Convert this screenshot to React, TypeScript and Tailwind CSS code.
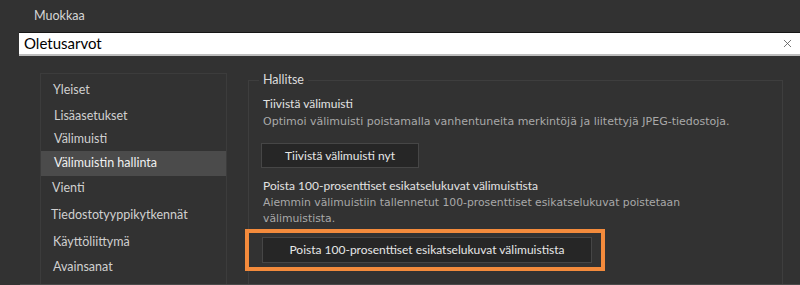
import { X } from "lucide-react";

const navItems = [
  { label: "Yleiset", pad: "pl-[12px]", h: "h-[28px]" },
  { label: "Lisäasetukset", pad: "pl-[13px]", h: "h-[24px]" },
  { label: "Välimuisti", pad: "pl-[13px]", h: "h-[23px]" },
  { label: "Välimuistin hallinta", pad: "pl-[13px]", h: "h-[25px]", active: true },
  { label: "Vienti", pad: "pl-[11px]", h: "h-[25px]" },
  { label: "Tiedostotyyppikytkennät", pad: "pl-[10px]", h: "h-[29px]" },
  { label: "Käyttöliittymä", pad: "pl-[12px]", h: "h-[25px]" },
  { label: "Avainsanat", pad: "pl-[12px]", h: "h-[24px]" },
];

export default function App() {
  return (
    <div className="w-[800px] h-[285px] overflow-hidden bg-[#323232] flex flex-col font-['Lato',sans-serif] text-[12px] text-[#dcdcdc]">
      <div className="h-[32px] pl-[34px] pt-[7px] text-[12.5px] text-[#d6d6d6]">Muokkaa</div>

      <div className="ml-[19px] h-[24px] bg-white border-t border-[#161616] border-b-2 border-b-[#bdbdbd] flex items-center justify-between pl-[5px] pr-[6px]">
        <span className="text-[15px] text-black leading-none">Oletusarvot</span>
        <X className="w-[13px] h-[13px] text-[#555]" strokeWidth={1.5} />
      </div>

      <div className="flex flex-1 pt-[17px] border-b border-[#4a4a4a] ml-[20px]">
        <div className="ml-[20px] w-[187px] border border-[#3c3c3c] border-b-0 flex flex-col pt-[2px] text-[12.5px]">
          {navItems.map((it) => (
            <div
              key={it.label}
              className={`${it.h} ${it.pad} flex items-center ${it.active ? "bg-[#4b4b4b] text-[#f0f0f0]" : "text-[#d0d0d0]"}`}
            >
              {it.label}
            </div>
          ))}
        </div>

        <div className="ml-[21px] w-[535px] border border-[#3e3e3e] border-b-0 mt-[7px] relative flex flex-col pl-[14px]">
          <span className="absolute -top-[10px] left-[10px] px-[4px] bg-[#323232] text-[#dcdcdc] text-[12.5px]">Hallitse</span>

          <div className="mt-[14px] text-[#e2e2e2]">Tiivistä välimuisti</div>
          <div className="text-[#a9a9a9] font-['DejaVu_Sans',sans-serif] text-[11px] leading-[17px]">
            Optimoi välimuisti poistamalla vanhentuneita merkintöjä ja liitettyjä JPEG-tiedostoja.
          </div>
          <button className="mt-[13px] w-[158px] h-[25px] bg-[#262626] border border-[#464646] text-[#e6e6e6] -ml-[2px]">
            Tiivistä välimuisti nyt
          </button>

          <div className="mt-[9px] text-[#e2e2e2]">Poista 100-prosenttiset esikatselukuvat välimuistista</div>
          <div className="text-[#a9a9a9] font-['DejaVu_Sans',sans-serif] text-[10.8px] leading-[16px] w-[440px]">
            Aiemmin välimuistiin tallennetut 100-prosenttiset esikatselukuvat poistetaan välimuistista.
          </div>
          <div className="-ml-[18px] mt-[2px] w-[360px] h-[42px] border-4 border-[#f48b3c] flex items-center pl-[13px]">
            <button className="w-[330px] h-[26px] bg-[#262626] border border-[#464646] text-[#e6e6e6]">
              Poista 100-prosenttiset esikatselukuvat välimuistista
            </button>
          </div>
        </div>
      </div>
    </div>
  );
}
